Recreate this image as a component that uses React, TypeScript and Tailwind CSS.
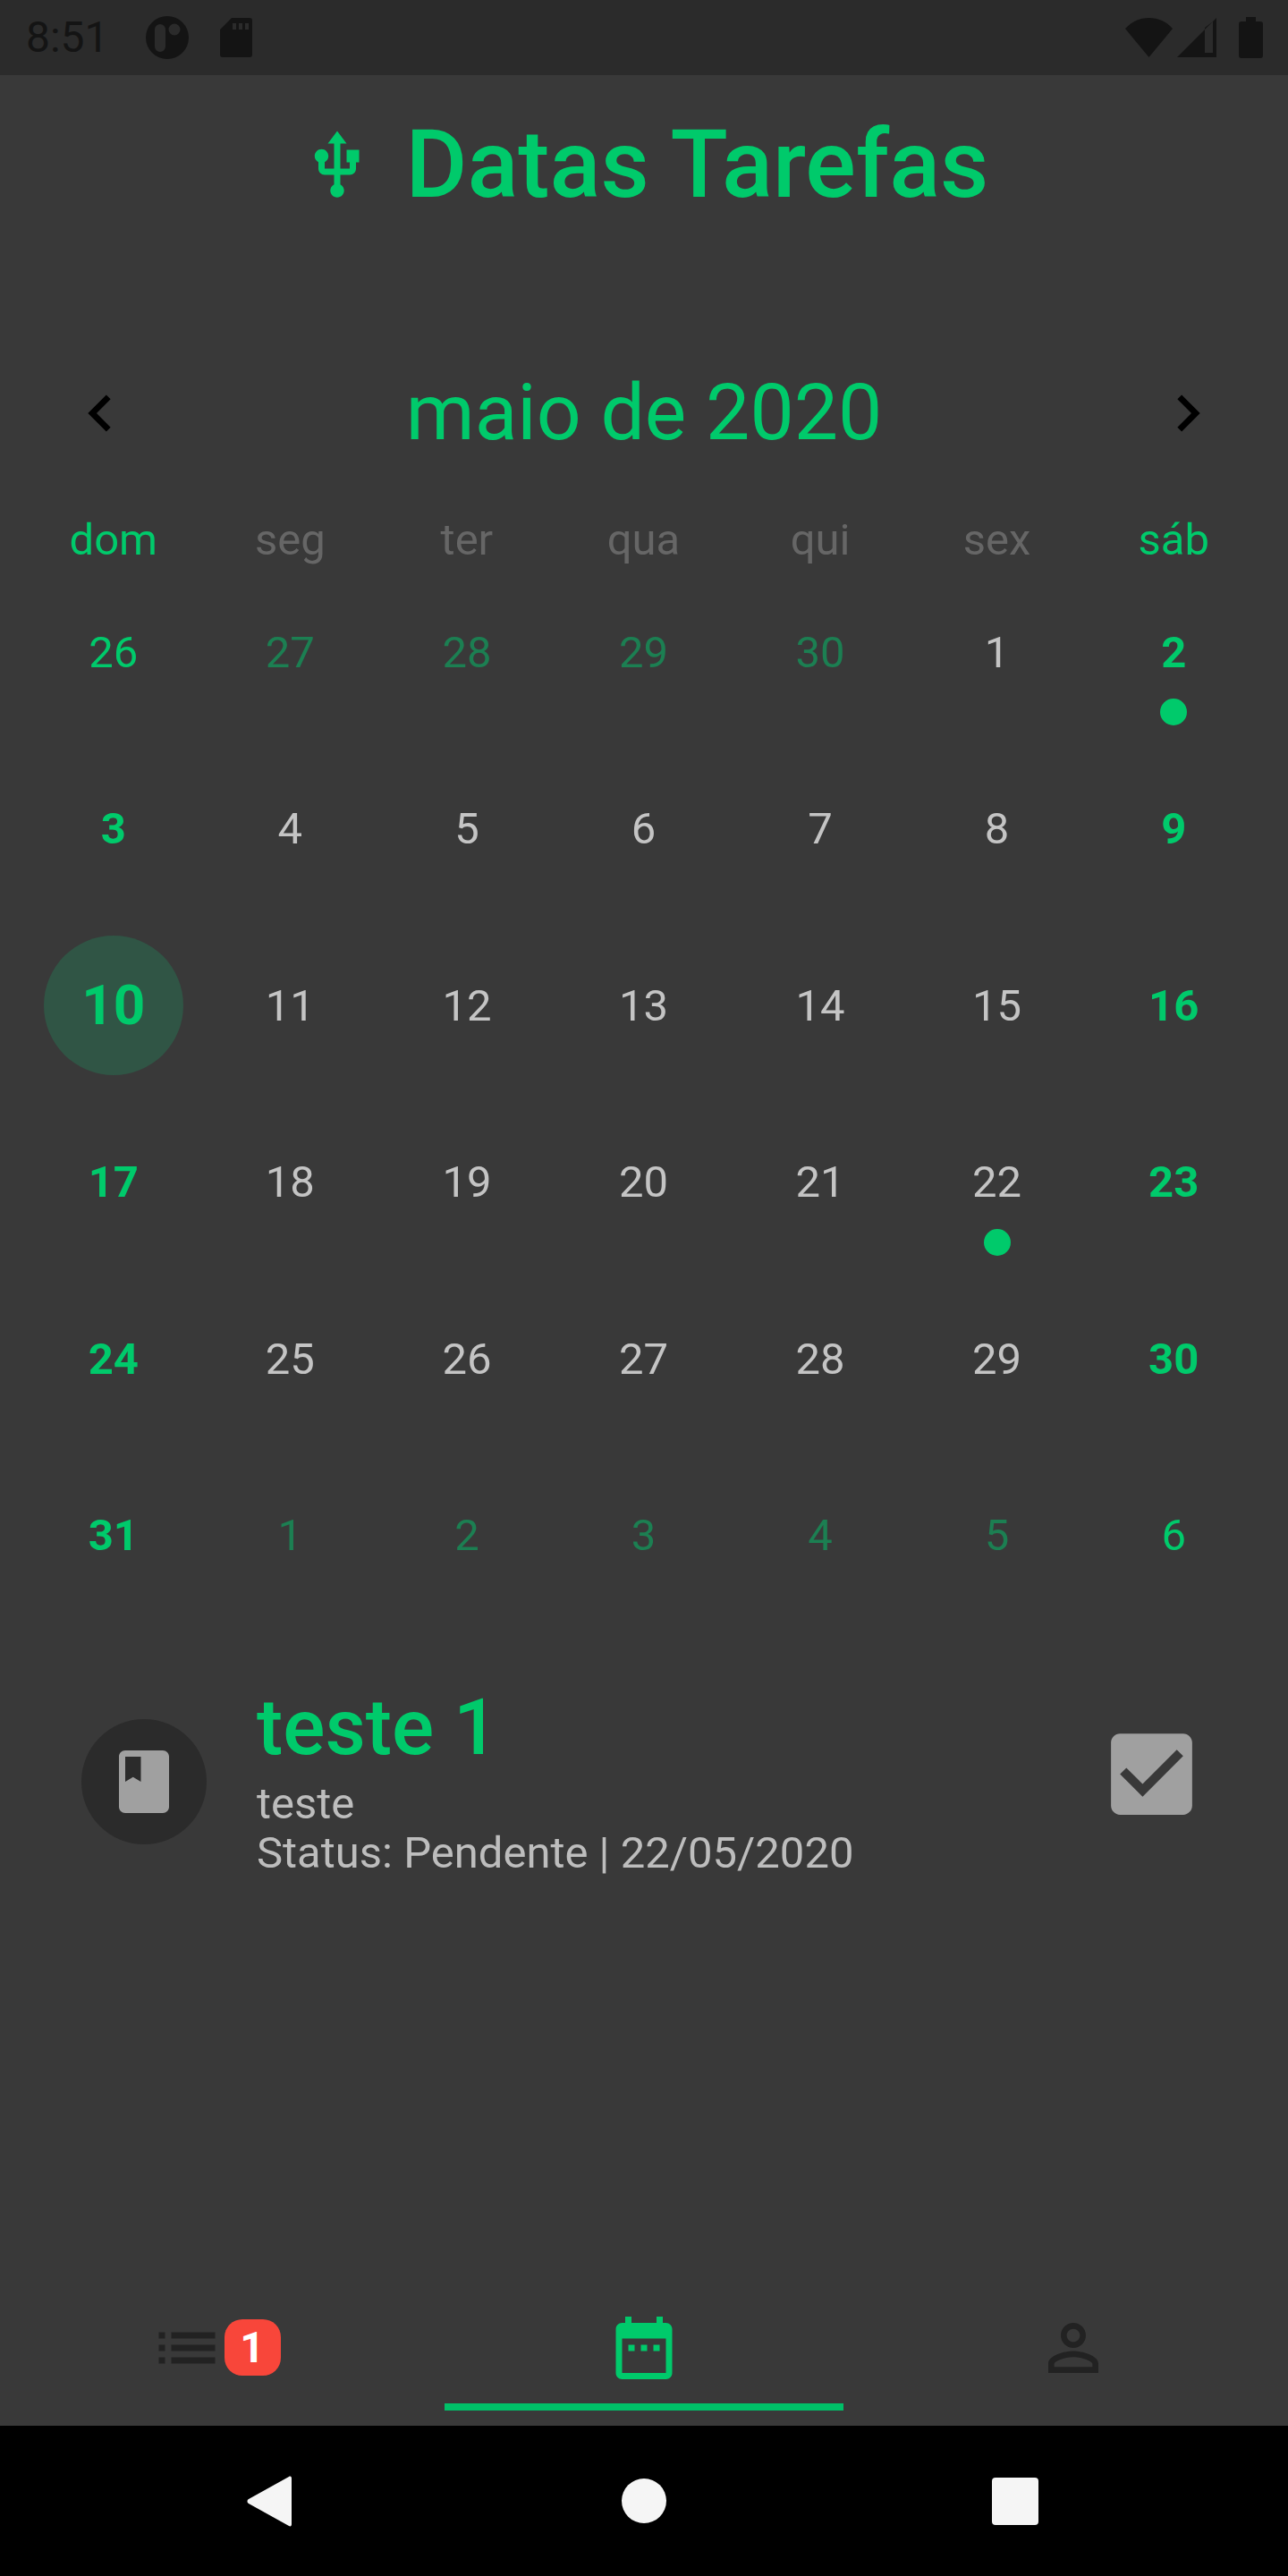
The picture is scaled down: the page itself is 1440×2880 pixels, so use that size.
const G = "#00ca6b";

function Mi({ d, size, fill, className }: { d: string; size: number; fill: string; className?: string }) {
  return (
    <svg width={size} height={size} viewBox="0 0 24 24" fill={fill} className={className}>
      <path d={d} />
    </svg>
  );
}

type Cell = { n: number; c: string; dot?: boolean; today?: boolean };

const B = "text-[#00ca6b] font-bold";
const D = "text-[#c4c4c4]";
const M = "text-[#1c7f52]";
const E = "text-[#00ca6b]";

const rows: Cell[][] = [
  [{ n: 26, c: E }, { n: 27, c: M }, { n: 28, c: M }, { n: 29, c: M }, { n: 30, c: M }, { n: 1, c: D }, { n: 2, c: B, dot: true }],
  [{ n: 3, c: B }, { n: 4, c: D }, { n: 5, c: D }, { n: 6, c: D }, { n: 7, c: D }, { n: 8, c: D }, { n: 9, c: B }],
  [{ n: 10, c: B, today: true }, { n: 11, c: D }, { n: 12, c: D }, { n: 13, c: D }, { n: 14, c: D }, { n: 15, c: D }, { n: 16, c: B }],
  [{ n: 17, c: B }, { n: 18, c: D }, { n: 19, c: D }, { n: 20, c: D }, { n: 21, c: D }, { n: 22, c: D, dot: true }, { n: 23, c: B }],
  [{ n: 24, c: B }, { n: 25, c: D }, { n: 26, c: D }, { n: 27, c: D }, { n: 28, c: D }, { n: 29, c: D }, { n: 30, c: B }],
  [{ n: 31, c: B }, { n: 1, c: M }, { n: 2, c: M }, { n: 3, c: M }, { n: 4, c: M }, { n: 5, c: M }, { n: 6, c: E }],
];

const weekdays = ["dom", "seg", "ter", "qua", "qui", "sex", "sáb"];

export default function App() {
  return (
    <div className="flex h-[2880px] w-[1440px] flex-col overflow-hidden bg-[#393939] font-[Roboto,sans-serif]">
      {/* status bar */}
      <div className="flex h-[84px] items-center bg-[#2b2b2b] pl-[29px] pr-[28px]">
        <span className="text-[48px] leading-none text-[#141414]">8:51</span>
        <svg width="48" height="48" viewBox="0 0 48 48" className="ml-[41px]">
          <path fillRule="evenodd" fill="#141414" d="M24 0a24 24 0 1 1 0 48a24 24 0 1 1 0-48ZM16 9a6 6 0 0 0-6 6v19a6 6 0 0 0 12 0v-19a6 6 0 0 0-6-6ZM32 8.500a6.500 6.500 0 1 0 0 13a6.500 6.500 0 1 0 0-13Z" />
        </svg>
        <svg width="36" height="44" viewBox="0 0 36 44" className="ml-[35px]">
          <path fillRule="evenodd" fill="#141414" d="M13 0h20a3 3 0 0 1 3 3v38a3 3 0 0 1-3 3H3a3 3 0 0 1-3-3V13ZM14 6v7h4V6ZM21 6v7h4V6ZM28 6v7h4V6Z" />
        </svg>
        <div className="flex-1" />
        <svg width="53" height="44" viewBox="0 0 53 44">
          <path fill="#141414" d="M26.500 0C16 0 7 4 0 12l26.500 32L53 12C46 4 37 0 26.500 0Z" />
        </svg>
        <svg width="44" height="44" viewBox="0 0 44 44" className="ml-[5px]">
          <path fillRule="evenodd" fill="#141414" d="M44 0V44H0ZM31 11 L31 39 H40 V4 Z" />
        </svg>
        <svg width="27" height="46" viewBox="0 0 27 46" className="ml-[25px]">
          <path fill="#141414" d="M8 0h11v5h5a3 3 0 0 1 3 3v35a3 3 0 0 1-3 3H3a3 3 0 0 1-3-3V8a3 3 0 0 1 3-3h5Z" />
        </svg>
      </div>

      {/* title */}
      <div className="flex h-[196px] items-center justify-center gap-[35px] pt-[6px]">
        <Mi size={84} fill={G} d="M15 7v4h1v2h-3V5h2l-3-4-3 4h2v8H8v-2.070c.7-.37 1.200-1.080 1.200-1.930 0-1.210-.99-2.200-2.200-2.200-1.210 0-2.200.99-2.200 2.200 0 .85.5 1.560 1.200 1.930V13c0 1.110.89 2 2 2h3v3.050c-.71.37-1.200 1.100-1.200 1.950 0 1.220.99 2.200 2.200 2.200 1.210 0 2.200-.98 2.200-2.200 0-.85-.49-1.580-1.200-1.950V15h3c1.110 0 2-.89 2-2v-2h1V7h-4z" />
        <span className="text-[105.6px] font-medium leading-none text-[#00ca6b]">Datas Tarefas</span>
      </div>

      {/* month header */}
      <div className="mt-[110px] flex h-[166px] items-center justify-between px-[71px] pb-[23px]">
        <Mi size={82} fill="#000000" d="M15.410 7.410L14 6l-6 6 6 6 1.410-1.410L10.830 12z" />
        <span className="text-[87.7px] leading-none text-[#00ca6b]">maio de 2020</span>
        <Mi size={82} fill="#000000" d="M8.590 16.590L10 18l6-6-6-6-1.410 1.410L13.170 12z" />
      </div>

      {/* weekdays */}
      <div className="grid h-[95px] grid-cols-7 items-center pl-[28px] pr-[29px]">
        {weekdays.map((w, i) => (
          <span key={w} className={`text-center text-[49px] leading-none ${i === 0 || i === 6 ? "text-[#00ca6b]" : "text-[#666666]"}`}>
            {w}
          </span>
        ))}
      </div>

      {/* days */}
      <div className="flex flex-col pl-[28px] pr-[29px]">
        {rows.map((row, r) => (
          <div key={r} className="grid h-[197.6px] grid-cols-7 justify-items-center">
            {row.map((c, i) => (
              <div key={i} className="relative flex h-[156px] w-[156px] items-center justify-center">
                {c.today ? (
                  <div className="flex h-[156px] w-[156px] items-center justify-center rounded-full bg-[#305545] text-[62px] font-bold leading-none text-[#00ca6b]">
                    {c.n}
                  </div>
                ) : (
                  <span className={`text-[49px] leading-none ${c.c}`}>{c.n}</span>
                )}
                {c.dot && <div className="absolute left-[63px] top-[130px] h-[30px] w-[30px] rounded-full bg-[#00ca6b]" />}
              </div>
            ))}
          </div>
        ))}
      </div>

      {/* task */}
      <div className="mt-[48px] flex items-center pl-[91px] pr-[92px]">
        <div className="flex h-[140px] w-[140px] items-center justify-center rounded-full bg-[#2b2b2b]">
          <Mi size={84} fill="#a0a0a0" d="M18 2H6c-1.100 0-2 .9-2 2v16c0 1.100.9 2 2 2h12c1.100 0 2-.9 2-2V4c0-1.100-.9-2-2-2zM6 4h5v8l-2.500-1.500L6 12V4z" />
        </div>
        <div className="ml-[56px] flex flex-1 flex-col">
          <span className="text-[88px] font-medium leading-[92px] text-[#00ca6b]">teste 1</span>
          <span className="mt-[12px] text-[49px] leading-[55px] text-[#bdbdbd]">teste</span>
          <span className="text-[49px] leading-[55px] text-[#bdbdbd]">Status: Pendente | 22/05/2020</span>
        </div>
        <Mi size={121} fill="#a0a0a0" className="mb-[16px]" d="M19 3H5c-1.110 0-2 .9-2 2v14c0 1.100.89 2 2 2h14c1.110 0 2-.9 2-2V5c0-1.100-.89-2-2-2zm-9 14l-5-5 1.410-1.410L10 14.170l7.590-7.590L19 8l-9 9z" />
      </div>

      <div className="flex-1" />

      {/* tabs */}
      <div className="grid h-[129px] grid-cols-3">
        <div className="flex justify-center">
          <Mi size={84} fill="#222222" d="M3 13h2v-2H3v2zm0 4h2v-2H3v2zm0-8h2V7H3v2zm4 4h14v-2H7v2zm0 4h14v-2H7v2zM7 7v2h14V7H7z" />
          <div className="mt-[10px] flex h-[63px] w-[63px] items-center justify-center rounded-[20px] bg-[#f8463a] text-[48px] font-bold leading-none text-white">1</div>
        </div>
        <div className="flex flex-col items-center justify-between">
          <Mi size={84} fill={G} d="M7 11h2v2H7zm4 0h2v2h-2zm4 0h2v2h-2zM19 4h-1V2h-2v2H8V2H6v2H5c-1.110 0-1.990.9-1.990 2L3 20c0 1.100.89 2 2 2h14c1.100 0 2-.9 2-2V6c0-1.100-.9-2-2-2zm0 16H5V9h14v11z" />
          <div className="mb-[17px] h-[8px] w-[446px] bg-[#00c068]" />
        </div>
        <div className="flex justify-center">
          <Mi size={84} fill="#222222" d="M12 5.900c1.160 0 2.100.94 2.100 2.100s-.94 2.100-2.100 2.100S9.900 9.160 9.900 8s.94-2.100 2.100-2.100m0 9c2.970 0 6.100 1.460 6.100 2.100v1.100H5.900V17c0-.64 3.130-2.100 6.100-2.100M12 4C9.790 4 8 5.790 8 8s1.790 4 4 4 4-1.790 4-4-1.790-4-4-4zm0 9c-2.670 0-8 1.340-8 4v3h16v-3c0-2.660-5.330-4-8-4z" />
        </div>
      </div>

      {/* navigation bar */}
      <div className="flex h-[168px] items-center justify-center bg-black pr-[3px]">
        <svg width="50" height="57" viewBox="0 0 50 57">
          <path fill="#f5f5f5" d="M47 1 C49 0 50 1 50 3 V54 C50 56 49 57 47 56 L2 31 C0 30 0 27 2 26 Z" />
        </svg>
        <div className="ml-[369px] h-[50px] w-[50px] rounded-full bg-[#f5f5f5]" />
        <div className="ml-[364px] h-[53px] w-[52px] rounded-[4px] bg-[#f5f5f5]" />
      </div>
    </div>
  );
}
